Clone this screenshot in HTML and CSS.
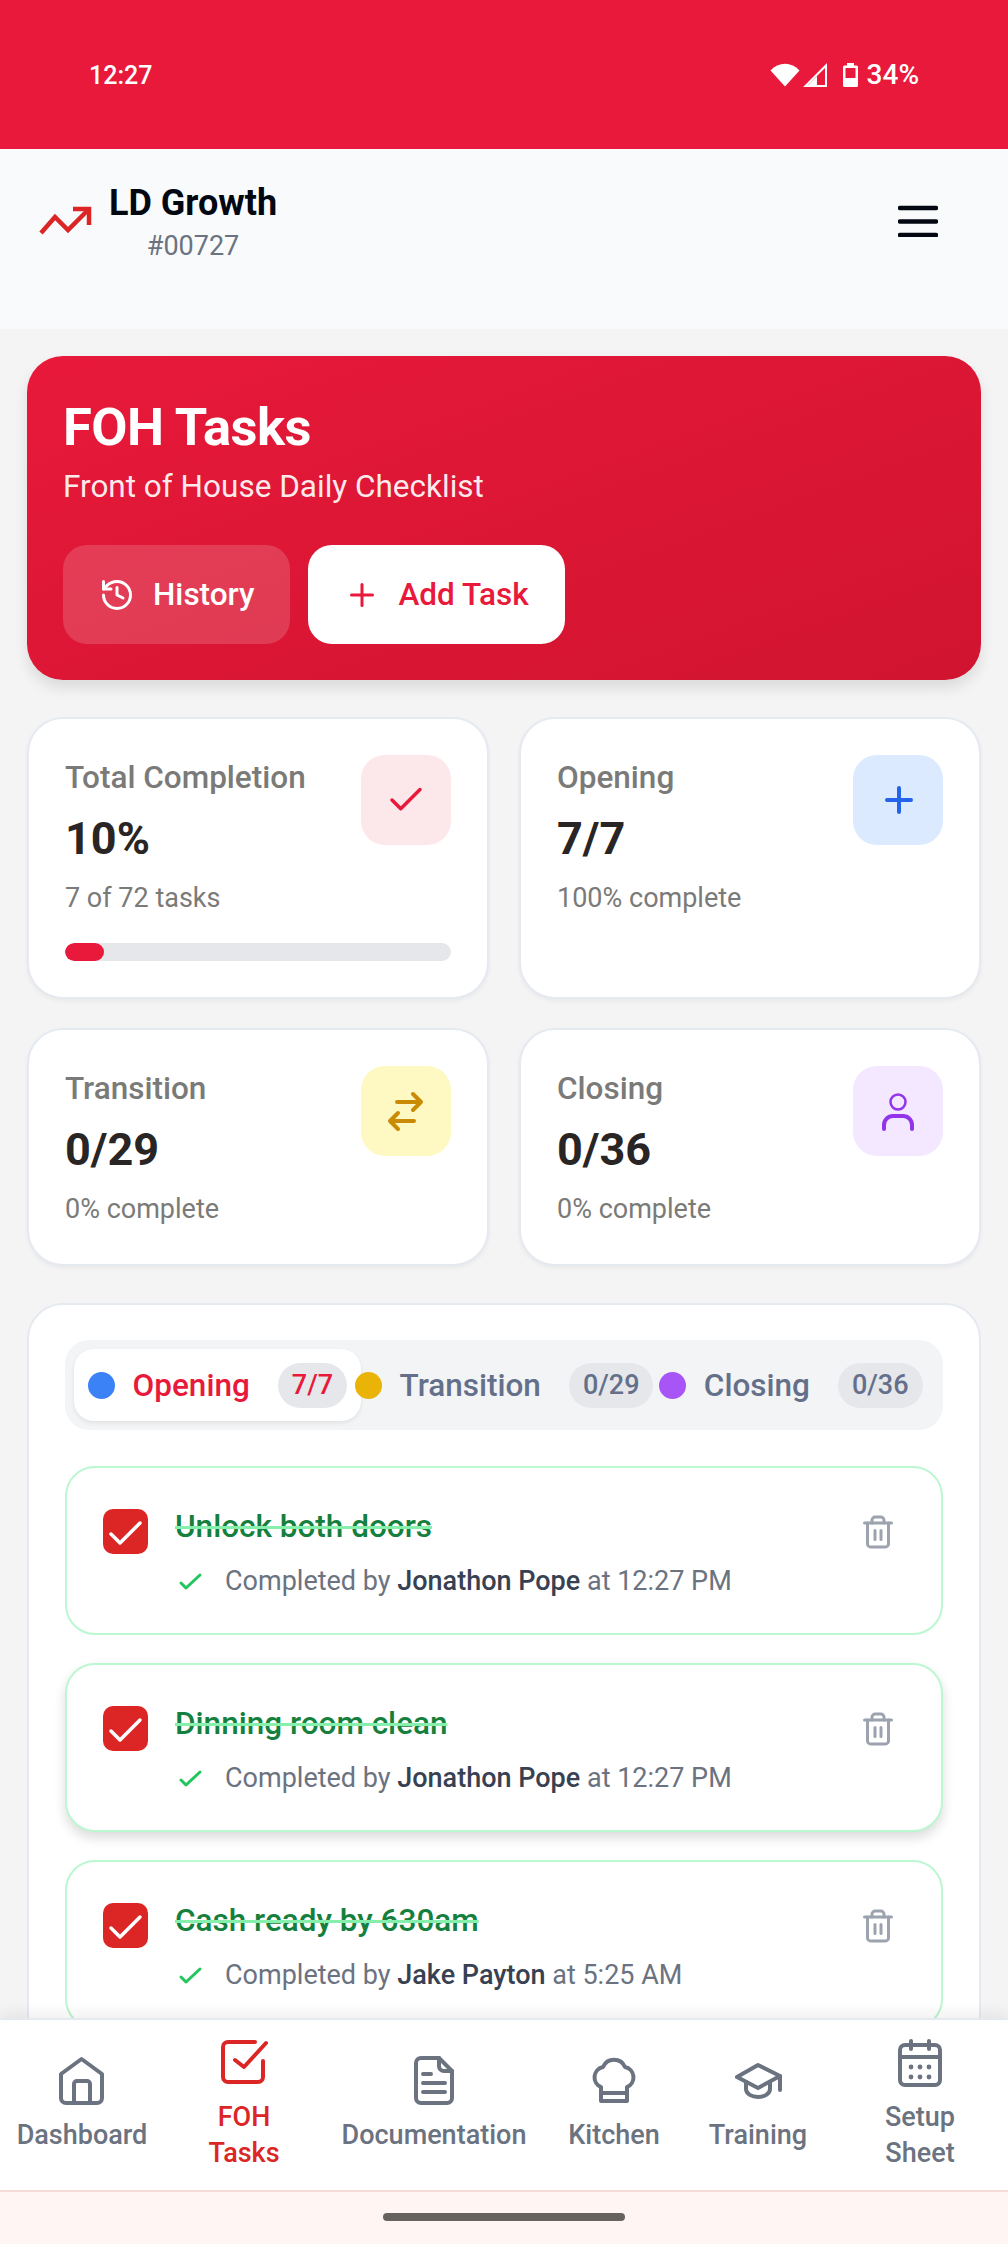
FILE: index.html
```html
<!DOCTYPE html>
<html lang="en">
<head>
<meta charset="utf-8">
<title>FOH Tasks</title>
<link rel="stylesheet" href="styles.css">
</head>
<body>
<div class="app">
  <div class="status">
    <span class="time">12:27</span>
    <div class="status-right">
      <svg class="ic-wifi" width="30" height="24" viewBox="0 0 30 24"><path d="M0.5 7.5C8.5 -1.5 21.5 -1.5 29.5 7.5L15 23.5Z" fill="#fff"/></svg>
      <svg class="ic-signal" width="24" height="24" viewBox="0 0 24 24"><path d="M23 2.5V23H2.5Z" fill="none" stroke="#fff" stroke-width="2"/><path d="M14 13L4 23H14Z" fill="#fff"/></svg>
      <svg class="ic-batt" width="15" height="24" viewBox="0 0 15 24"><path d="M4 0h7v2.5h2.5a1.5 1.5 0 0 1 1.5 1.5v18.5a1.5 1.5 0 0 1-1.5 1.5H1.5A1.5 1.5 0 0 1 0 22.5V4a1.5 1.5 0 0 1 1.5-1.5H4Z" fill="#fff"/><rect x="2.5" y="5" width="10" height="10" fill="#e8193a"/></svg>
      <span class="pct">34%</span>
    </div>
  </div>

  <header class="topbar">
    <div class="brand">
      <svg class="logo" width="54" height="32" viewBox="0 0 54 32" fill="none" stroke="#dc2626" stroke-width="4.5"><path d="M3 28L17 12L30 25L51 4"/><path d="M35 4H51V20"/></svg>
      <div class="brand-text">
        <div class="brand-name">LD Growth</div>
        <div class="brand-id">#00727</div>
      </div>
    </div>
    <svg class="burger" width="40" height="32" viewBox="0 0 40 32" stroke="#030712" stroke-width="4.5" stroke-linecap="round"><path d="M2 3H38M2 16.500H38M2 30H38"/></svg>
  </header>

  <main class="content">
    <section class="hero">
      <h1 class="hero-title">FOH Tasks</h1>
      <p class="hero-sub">Front of House Daily Checklist</p>
      <div class="hero-actions">
        <button class="btn btn-ghost">
          <svg width="36" height="36" viewBox="0 0 24 24" fill="none" stroke="currentColor" stroke-width="2" stroke-linecap="round" stroke-linejoin="round"><path d="M3 12a9 9 0 1 0 9-9 9.75 9.75 0 0 0-6.74 2.74L3 8"/><path d="M3 3v5h5"/><path d="M12 7v5l4 2"/></svg>
          History
        </button>
        <button class="btn btn-solid">
          <svg width="36" height="36" viewBox="0 0 24 24" fill="none" stroke="currentColor" stroke-width="2" stroke-linecap="round"><path d="M5 12h14"/><path d="M12 5v14"/></svg>
          Add Task
        </button>
      </div>
    </section>

    <section class="stats">
      <article class="stat">
        <div class="stat-top">
          <div>
            <div class="stat-label">Total Completion</div>
            <div class="stat-value">10%</div>
            <div class="stat-note">7 of 72 tasks</div>
          </div>
          <div class="stat-icon tint-red">
            <svg width="42" height="42" viewBox="0 0 24 24" fill="none" stroke="#e8193a" stroke-width="2" stroke-linecap="round" stroke-linejoin="round"><path d="M20 6 9 17l-5-5"/></svg>
          </div>
        </div>
        <div class="bar"><div class="bar-fill"></div></div>
      </article>
      <article class="stat">
        <div class="stat-top">
          <div>
            <div class="stat-label">Opening</div>
            <div class="stat-value">7/7</div>
            <div class="stat-note">100% complete</div>
          </div>
          <div class="stat-icon tint-blue">
            <svg width="48" height="48" viewBox="0 0 48 48" fill="none" stroke="#2563eb" stroke-width="4" stroke-linecap="round"><path d="M13 24H37M25 12V36"/></svg>
          </div>
        </div>
      </article>
      <article class="stat">
        <div class="stat-top">
          <div>
            <div class="stat-label">Transition</div>
            <div class="stat-value">0/29</div>
            <div class="stat-note">0% complete</div>
          </div>
          <div class="stat-icon tint-yellow">
            <svg width="48" height="48" viewBox="0 0 48 48" fill="none" stroke="#ca8a04" stroke-width="4" stroke-linecap="round" stroke-linejoin="round"><path d="M15 15H39M31 7L39 15L31 23"/><path d="M32 34H8M16 26L8 34L16 42"/></svg>
          </div>
        </div>
      </article>
      <article class="stat">
        <div class="stat-top">
          <div>
            <div class="stat-label">Closing</div>
            <div class="stat-value">0/36</div>
            <div class="stat-note">0% complete</div>
          </div>
          <div class="stat-icon tint-purple">
            <svg width="48" height="48" viewBox="0 0 48 48" fill="none" stroke="#9333ea" stroke-linecap="round"><circle cx="24" cy="15" r="7.500" stroke-width="2.500"/><path d="M10 42V38a9 9 0 0 1 9-9h10a9 9 0 0 1 9 9v4" stroke-width="4"/></svg>
          </div>
        </div>
      </article>
    </section>

    <section class="panel">
      <div class="tabs">
        <div class="tab active"><span class="dot dot-blue"></span><span class="tab-name">Opening</span><span class="badge">7/7</span></div>
        <div class="tab"><span class="dot dot-yellow"></span><span class="tab-name">Transition</span><span class="badge">0/29</span></div>
        <div class="tab"><span class="dot dot-purple"></span><span class="tab-name">Closing</span><span class="badge">0/36</span></div>
      </div>

      <div class="tasks">
        <article class="task">
          <span class="checkbox"><svg width="45" height="45" viewBox="0 0 45 45" fill="none" stroke="#fff" stroke-width="3.500" stroke-linecap="round" stroke-linejoin="round"><path d="M8 25L17 34L37 14"/></svg></span>
          <div class="task-body">
            <div class="task-title">Unlock both doors</div>
            <div class="task-meta"><svg width="30" height="30" viewBox="0 0 30 30" fill="none" stroke="#22c55e" stroke-width="3" stroke-linecap="round" stroke-linejoin="round"><path d="M6 16L11 21L25 8"/></svg><span>Completed by <b>Jonathon Pope</b> at 12:27 PM</span></div>
          </div>
          <button class="trash"><svg width="36" height="36" viewBox="0 0 24 24" fill="none" stroke="#9ca3af" stroke-width="2" stroke-linecap="round" stroke-linejoin="round"><path d="M3 6h18"/><path d="M19 6v14c0 1-1 2-2 2H7c-1 0-2-1-2-2V6"/><path d="M8 6V4c0-1 1-2 2-2h4c1 0 2 1 2 2v2"/><path d="M10 11v6"/><path d="M14 11v6"/></svg></button>
        </article>
        <article class="task task-raised">
          <span class="checkbox"><svg width="45" height="45" viewBox="0 0 45 45" fill="none" stroke="#fff" stroke-width="3.500" stroke-linecap="round" stroke-linejoin="round"><path d="M8 25L17 34L37 14"/></svg></span>
          <div class="task-body">
            <div class="task-title">Dinning room clean</div>
            <div class="task-meta"><svg width="30" height="30" viewBox="0 0 30 30" fill="none" stroke="#22c55e" stroke-width="3" stroke-linecap="round" stroke-linejoin="round"><path d="M6 16L11 21L25 8"/></svg><span>Completed by <b>Jonathon Pope</b> at 12:27 PM</span></div>
          </div>
          <button class="trash"><svg width="36" height="36" viewBox="0 0 24 24" fill="none" stroke="#9ca3af" stroke-width="2" stroke-linecap="round" stroke-linejoin="round"><path d="M3 6h18"/><path d="M19 6v14c0 1-1 2-2 2H7c-1 0-2-1-2-2V6"/><path d="M8 6V4c0-1 1-2 2-2h4c1 0 2 1 2 2v2"/><path d="M10 11v6"/><path d="M14 11v6"/></svg></button>
        </article>
        <article class="task">
          <span class="checkbox"><svg width="45" height="45" viewBox="0 0 45 45" fill="none" stroke="#fff" stroke-width="3.500" stroke-linecap="round" stroke-linejoin="round"><path d="M8 25L17 34L37 14"/></svg></span>
          <div class="task-body">
            <div class="task-title">Cash ready by 630am</div>
            <div class="task-meta"><svg width="30" height="30" viewBox="0 0 30 30" fill="none" stroke="#22c55e" stroke-width="3" stroke-linecap="round" stroke-linejoin="round"><path d="M6 16L11 21L25 8"/></svg><span>Completed by <b>Jake Payton</b> at 5:25 AM</span></div>
          </div>
          <button class="trash"><svg width="36" height="36" viewBox="0 0 24 24" fill="none" stroke="#9ca3af" stroke-width="2" stroke-linecap="round" stroke-linejoin="round"><path d="M3 6h18"/><path d="M19 6v14c0 1-1 2-2 2H7c-1 0-2-1-2-2V6"/><path d="M8 6V4c0-1 1-2 2-2h4c1 0 2 1 2 2v2"/><path d="M10 11v6"/><path d="M14 11v6"/></svg></button>
        </article>
      </div>
    </section>
  </main>

  <nav class="nav">
    <a class="nav-item">
      <svg class="nav-ic" viewBox="0 0 48 48"><path d="M23.500 2L3 17V41a5 5 0 0 0 5 5H39a5 5 0 0 0 5-5V17Z"/><path d="M16 46V27a3 3 0 0 1 3-3H29a3 3 0 0 1 3 3V46"/></svg>
      <span>Dashboard</span>
    </a>
    <a class="nav-item nav-active">
      <svg class="nav-ic" viewBox="0 0 48 48"><path d="M35 3H8a5 5 0 0 0-5 5V38a5 5 0 0 0 5 5H38a5 5 0 0 0 5-5V22"/><path d="M15 21L24 28L46 4"/></svg>
      <span>FOH<br>Tasks</span>
    </a>
    <a class="nav-item">
      <svg class="nav-ic" viewBox="0 0 48 48"><path d="M11 1H29L42 14V41a5 5 0 0 1-5 5H11a5 5 0 0 1-5-5V6a5 5 0 0 1 5-5Z"/><path d="M29 1V9a5 5 0 0 0 5 5H42"/><path d="M13 17H21M13 26H35M13 35H35"/></svg>
      <span>Documentation</span>
    </a>
    <a class="nav-item">
      <svg class="nav-ic" viewBox="0 0 48 48"><path d="M11 30A10.500 10.500 0 0 1 13 10A12 12 0 0 1 35 10A10.500 10.500 0 0 1 37 30V44H11Z"/><path d="M11 36H37"/></svg>
      <span>Kitchen</span>
    </a>
    <a class="nav-item">
      <svg class="nav-ic" viewBox="0 0 48 48"><path d="M3 20L24 8L46 19L24 31Z"/><path d="M12 25V32C12 37 18 40 24 40C30 40 36 37 36 32V25"/><path d="M46 19V33"/></svg>
      <span>Training</span>
    </a>
    <a class="nav-item">
      <svg class="nav-ic" viewBox="0 0 48 48"><rect x="4" y="6" width="40" height="40" rx="5"/><path d="M15 2V10M33 2V10M4 18H44"/><g class="nav-dots"><circle cx="15" cy="28" r="2.400"/><circle cx="24" cy="28" r="2.400"/><circle cx="33" cy="28" r="2.400"/><circle cx="15" cy="38" r="2.400"/><circle cx="24" cy="38" r="2.400"/><circle cx="33" cy="38" r="2.400"/></g></svg>
      <span>Setup<br>Sheet</span>
    </a>
  </nav>
  <div class="gesture"><div class="handle"></div></div>
</div>
</body>
</html>
```

FILE: styles.css
```css
* { box-sizing: border-box; }
html, body { margin: 0; padding: 0; }
body { font-family: Roboto, "Noto Sans", sans-serif; background: #f4f4f5; }
.app { width: 1008px; height: 2244px; display: flex; flex-direction: column; overflow: hidden; background: #f4f4f5; }

.status { height: 149px; flex: none; background: #e8193a; color: #fff; display: flex; justify-content: space-between; align-items: flex-start; padding: 57px 89px 0; font-size: 25px; font-weight: 500; line-height: 36px; }
.time { margin-top: 1px; }
.status-right { display: flex; align-items: center; }
.status-right svg { display: block; }
.ic-signal { margin-left: 3px; }
.ic-batt { margin-left: 16px; }
.pct { margin-left: 9px; font-size: 28px; }

.topbar { height: 180px; flex: none; background: #f9fafb; display: flex; justify-content: space-between; align-items: center; padding: 0 70px 33px 38px; }
.brand { display: flex; align-items: center; gap: 17px; }
.logo { display: block; margin-bottom: 3px; }
.brand-text { text-align: center; }
.brand-name { font-size: 36px; font-weight: 700; line-height: 48px; color: #030712; }
.brand-id { font-size: 27px; line-height: 40px; color: #6b7280; margin-top: -1px; }
.burger { display: block; margin-bottom: 3px; }

.content { flex: 1; min-height: 0; overflow: hidden; padding: 27px 27px 0; }

.hero { height: 324px; padding: 36px; border-radius: 36px; background: linear-gradient(160deg, #e8193a, #d0142f); color: #fff; box-shadow: 0 8px 14px rgba(0,0,0,.1); }
.hero-title { margin: 0; font-size: 52.5px; line-height: 70px; font-weight: 700; letter-spacing: -.5px; }
.hero-sub { margin: 2px 0 0; font-size: 31.5px; line-height: 45px; color: rgba(255,255,255,.92); }
.hero-actions { display: flex; gap: 18px; margin-top: 36px; }
.btn { height: 99px; padding: 0 36px; border: 0; border-radius: 24px; display: flex; align-items: center; gap: 18px; font-family: inherit; font-size: 31.5px; font-weight: 500; }
.btn-ghost { background: rgba(255,255,255,.16); color: #fff; }
.btn-solid { background: #fff; color: #e8193a; }
.btn svg { display: block; }

.stats { display: grid; grid-template-columns: 1fr 1fr; gap: 29px 30px; margin-top: 37px; }
.stat { background: #fff; border: 2px solid #e5e9f0; border-radius: 36px; padding: 36px; box-shadow: 0 2px 4px rgba(0,0,0,.05); }
.stat-top { display: flex; justify-content: space-between; align-items: flex-start; }
.stat-label { font-size: 31.5px; line-height: 45px; font-weight: 500; color: #7a7a78; }
.stat-value { font-size: 45px; line-height: 60px; font-weight: 700; color: #292524; margin-top: 9px; }
.stat-note { font-size: 27px; line-height: 37px; color: #7a7a78; margin-top: 11px; }
.stat-icon { width: 90px; height: 90px; border-radius: 24px; display: flex; align-items: center; justify-content: center; flex: none; }
.tint-red { background: #fce7ea; }
.tint-blue { background: #dbeafe; }
.tint-yellow { background: #fef9c3; }
.tint-purple { background: #f3e8ff; }
.bar { height: 18px; border-radius: 9px; background: #e5e7eb; margin-top: 26px; overflow: hidden; }
.bar-fill { width: 10%; height: 100%; border-radius: 9px; background: #e8193a; }

.panel { margin-top: 37px; background: #fff; border: 2px solid #e5e9f0; border-radius: 36px; padding: 35px 36px; }
.tabs { display: flex; padding: 9px; background: #f3f4f6; border-radius: 24px; }
.tab { flex: 1 1 0; min-width: 0; height: 72px; display: flex; align-items: center; justify-content: center; border-radius: 20px; white-space: nowrap; font-size: 31.5px; font-weight: 500; color: #64708a; }
.tab.active { background: #fff; color: #e8193a; box-shadow: 0 2px 4px rgba(0,0,0,.08); }
.dot { width: 27px; height: 27px; border-radius: 50%; margin-right: 18px; flex: none; }
.dot-blue { background: #3b82f6; }
.dot-yellow { background: #eab308; }
.dot-purple { background: #a855f7; }
.badge { height: 45px; padding: 0 14px; margin-left: 28px; border-radius: 23px; background: #e5e7eb; display: flex; align-items: center; font-size: 27px; font-weight: 500; }

.tasks { display: flex; flex-direction: column; gap: 28px; margin-top: 36px; }
.task { height: 169px; flex: none; display: flex; align-items: flex-start; padding: 36px 36px 0 36px; border: 2.5px solid #bbf7d0; border-radius: 30px; background: #fff; }
.task-raised { box-shadow: 0 6px 12px rgba(0,0,0,.14); }
.checkbox { width: 45px; height: 45px; margin-top: 5px; border-radius: 10px; background: #dc2626; flex: none; }
.checkbox svg { display: block; }
.task-body { flex: 1; min-width: 0; margin-left: 27px; }
.task-title { font-size: 31.5px; line-height: 45px; font-weight: 500; color: #15803d; text-decoration: line-through; text-decoration-color: #86efac; text-decoration-thickness: 3px; }
.task-meta { display: flex; align-items: center; margin-top: 14px; font-size: 27px; line-height: 37px; color: #6b7280; }
.task-meta svg { flex: none; margin-right: 20px; }
.task-meta b { font-weight: 500; color: #374151; }
.trash { width: 54px; height: 54px; padding: 9px; border: 0; background: none; flex: none; margin-top: 1px; }
.trash svg { display: block; }

.nav { height: 172px; flex: none; position: relative; background: #fff; border-top: 2px solid #e5e9f0; display: grid; grid-template-columns: 164px 160px 220px 140px 148px 176px; box-shadow: 0 -6px 12px rgba(0,0,0,.06); }
.nav-item { display: flex; flex-direction: column; align-items: center; justify-content: center; text-align: center; font-size: 27px; line-height: 36px; font-weight: 500; color: #6b7280; }
.nav-ic { width: 48px; height: 48px; margin-bottom: 12px; display: block; overflow: visible; fill: none; stroke: currentColor; stroke-width: 4; stroke-linecap: round; stroke-linejoin: round; }
.nav-dots { fill: currentColor; stroke: none; }
.nav-active { color: #dc2626; }

.gesture { height: 54px; flex: none; background: #fff6f4; border-top: 2px solid #f8dcda; display: flex; justify-content: center; padding-top: 21px; }
.handle { width: 242px; height: 8px; border-radius: 4px; background: #68625f; }
```
